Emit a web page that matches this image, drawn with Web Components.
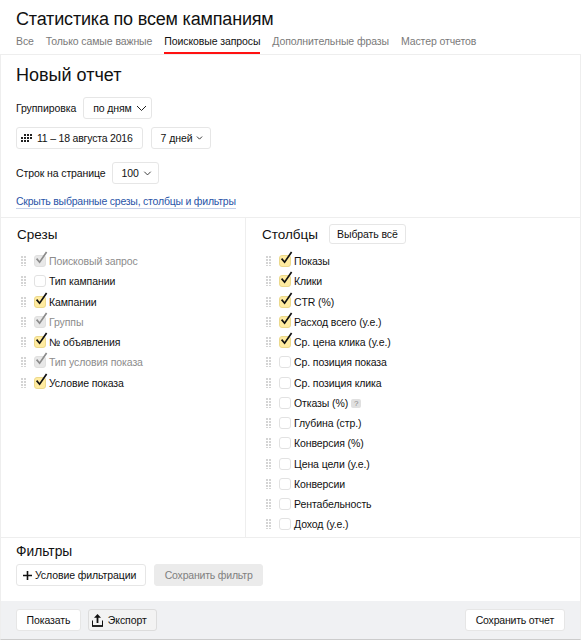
<!DOCTYPE html>
<html lang="ru">
<head>
<meta charset="utf-8">
<title>Статистика</title>
<style>
  html, body { margin: 0; background: #fff; }
  body { font-family: "Liberation Sans", Arial, sans-serif; color: #000; }
</style>
</head>
<body>
<report-page></report-page>

<script>
  // Plain small button, also used as a dropdown when it has the "arrow" attribute
  class YaButton extends HTMLElement {
    constructor() {
      super();
      this.attachShadow({ mode: 'open' });
      const size = Number(this.getAttribute('arrow')) || 11;
      const arrow = this.hasAttribute('arrow')
        ? `<svg class="arrow" width="${size}" height="${Math.round(size * 0.6)}" viewBox="0 0 11 7"><path d="M1 1l4.5 4.5L10 1" fill="none" stroke="#222" stroke-width="${11 / size}"/></svg>`
        : '';
      this.shadowRoot.innerHTML = `
      <style>
        :host {
          display: inline-flex;
          box-sizing: border-box;
          height: 22px;
          align-items: center;
          justify-content: center;
          gap: 4px;
          padding: 0 var(--pad-right, 10px) 0 var(--pad-left, 10px);
          background: #fff;
          border: 1px solid #e6e6e6;
          border-radius: 3px;
          font-size: 10.5px;
          letter-spacing: var(--track, -0.1px);
          white-space: nowrap;
          color: #111;
        }
        :host([arrow]) { padding-left: 9px; padding-right: var(--pad-right, 4px); }
        :host([disabled]) {
          background: #ebebeb;
          border-color: #ebebeb;
          color: #808080;
        }
        :host([gray]) {
          background: #f3f3f3;
          border-color: #dcdcdc;
        }
        ::slotted(svg) { display: block; flex: none; }
      </style>
      <slot></slot>${arrow}`;
    }
  }
  customElements.define('ya-button', YaButton);

  // Drag handle + checkbox + label
  class CheckRow extends HTMLElement {
    constructor() {
      super();
      this.attachShadow({ mode: 'open' });
      const tick = this.hasAttribute('checked') || this.hasAttribute('locked')
        ? `<svg class="tick" width="15" height="15" viewBox="0 0 15 15"><path d="M2.6 7.6l3 3.6L12.6 1" fill="none" stroke-width="1.7"/></svg>`
        : '';
      this.shadowRoot.innerHTML = `
      <style>
        :host {
          display: flex;
          align-items: center;
          height: 20.25px;
          font-size: 10.5px;
          letter-spacing: -0.1px;
          color: #111;
          white-space: nowrap;
        }
        :host([locked]) { color: #8c8c8c; }
        .grip {
          width: 6px;
          height: 10px;
          margin-right: 7px;
          flex: none;
          background-image: radial-gradient(circle at 1px 1px, #d4d4d4 1px, transparent 1px);
          background-size: 3px 3px;
        }
        .box {
          position: relative;
          box-sizing: border-box;
          width: 12px;
          height: 12px;
          margin-right: 3px;
          flex: none;
          border: 1px solid #e2e2e2;
          border-radius: 3px;
          background: #fff;
        }
        :host([checked]) .box { background: #ffeba0; border-color: #ecd98c; }
        :host([locked]) .box { background: #e8e8e8; border-color: #e0e0e0; }
        /* tick sticks out of the box at the top right */
        .tick { position: absolute; left: -1px; top: -5px; stroke: #111; }
        :host([locked]) .tick { stroke: #8c8c8c; }
        ::slotted(.hint) {
          display: inline-block;
          box-sizing: border-box;
          width: 10px;
          height: 9px;
          margin-left: 3px;
          border-radius: 2px;
          background: #e0e0e0;
          color: #888;
          font-size: 8px;
          line-height: 9px;
          letter-spacing: 0;
          text-align: center;
          vertical-align: 1px;
        }
      </style>
      <span class="grip"></span>
      <span class="box">${tick}</span>
      <span class="label"><slot></slot></span>`;
    }
  }
  customElements.define('check-row', CheckRow);

  class TabBar extends HTMLElement {
    constructor() {
      super();
      this.attachShadow({ mode: 'open' });
      this.shadowRoot.innerHTML = `
      <style>
        :host {
          display: flex;
          gap: 12px;
          height: 26px;
          padding-left: 16px;
          font-size: 10.5px;
          letter-spacing: -0.1px;
          color: #7a7a7a;
        }
        ::slotted(a) {
          display: block;
          box-sizing: border-box;
          height: 26px;
          padding-top: 7px;
          white-space: nowrap;
        }
        ::slotted(a.on) {
          color: #111;
          border-bottom: 2px solid #f11;
          height: 26px;
        }
      </style>
      <slot></slot>`;
    }
  }
  customElements.define('tab-bar', TabBar);

  class ReportPage extends HTMLElement {
    constructor() {
      super();
      this.attachShadow({ mode: 'open' });
      const rows = (list) => list.map(([text, state]) =>
        `<check-row ${state || ''}>${text}</check-row>`).join('');
      const slices = rows([
        ['Поисковый запрос', 'locked'],
        ['Тип кампании'],
        ['Кампании', 'checked'],
        ['Группы', 'locked'],
        ['№ объявления', 'checked'],
        ['Тип условия показа', 'locked'],
        ['Условие показа', 'checked']
      ]);
      const columns = rows([
        ['Показы', 'checked'],
        ['Клики', 'checked'],
        ['CTR (%)', 'checked'],
        ['Расход всего (у.е.)', 'checked'],
        ['Ср. цена клика (у.е.)', 'checked'],
        ['Ср. позиция показа'],
        ['Ср. позиция клика'],
        ['Отказы (%)<span class="hint">?</span>'],
        ['Глубина (стр.)'],
        ['Конверсия (%)'],
        ['Цена цели (у.е.)'],
        ['Конверсии'],
        ['Рентабельность'],
        ['Доход (у.е.)']
      ]);
      this.shadowRoot.innerHTML = `
      <style>
        :host {
          display: block;
          width: 582px;
          height: 643px;
          overflow: hidden;
        }
        h1 {
          margin: 0;
          padding: 8px 0 0 16px;
          height: 20px;
          font-size: 18px;
          letter-spacing: -0.18px;
          line-height: 22px;
          font-weight: 400;
          color: #111;
        }
        .card {
          box-sizing: border-box;
          width: 581px;
          height: 586px;
          border: 1px solid #eee;
          border-bottom: 1px solid #ccc;
          display: flex;
          flex-direction: column;
        }
        .form {
          height: 163px;
          box-sizing: border-box;
          padding: 9px 15px 0;
          border-bottom: 1px solid #eee;
          flex: none;
        }
        h2 {
          margin: 0 0 11px;
          font-size: 18px;
          line-height: 22px;
          font-weight: 400;
          color: #111;
        }
        .line {
          display: flex;
          align-items: center;
          gap: 8px;
          margin-bottom: 8px;
          font-size: 10.5px;
          letter-spacing: -0.1px;
          color: #111;
        }
        .line.group { gap: 7px; }
        .line.rows { gap: 6px; margin-top: 13px; margin-bottom: 7px; }
        a.toggle {
          display: inline-block;
          font-size: 10.5px;
          letter-spacing: -0.22px;
          color: #2a55a8;
          text-decoration: none;
          border-bottom: 1px solid #c5d0e8;
          line-height: 13px;
        }
        .cols {
          flex: none;
          height: 320px;
          display: grid;
          grid-template-columns: 244px 1fr;
          border-bottom: 1px solid #eee;
          box-sizing: border-box;
        }
        .cols > section { padding: 7px 16px 0 16px; }
        .cols > section + section { border-left: 1px solid #eee; }
        h3 {
          margin: 0;
          font-size: 13.5px;
          line-height: 18px;
          font-weight: 400;
          color: #111;
        }
        .head {
          display: flex;
          align-items: center;
          gap: 11px;
          height: 20px;
          margin-bottom: 6px;
        }
        .head ya-button {
          height: 20px;
          margin-top: -2px;
          --pad-left: 7px;
          --pad-right: 7px;
        }
        .list { padding-left: 4px; }
        .filters {
          flex: none;
          height: 63px;
          box-sizing: border-box;
          padding: 5px 15px 0;
        }
        .filters h3 { font-size: 13.8px; margin-bottom: 3px; }
        .filters div { display: flex; gap: 8px; }
        .add { --pad-left: 6px; --pad-right: 9px; gap: 3px; }
        .filters ya-button[disabled] { --track: -0.2px; --pad-left: 9.5px; --pad-right: 9.5px; }
        .date { --pad-left: 3px; --pad-right: 9px; --track: -0.2px; }
        .period { --pad-right: 7px; }
        .pages { --pad-right: 6px; }
        .bar {
          flex: 1;
          display: flex;
          align-items: flex-start;
          gap: 7px;
          padding: 8px 15px 0;
          background: #f0f1f3;
        }
        .bar .gap { flex: 1; }
        .show { --pad-left: 9.5px; --pad-right: 9.5px; }
        .export { --pad-left: 3px; --pad-right: 9px; gap: 5px; }
        .save { --track: -0.2px; }
      </style>
      <h1>Статистика по всем кампаниям</h1>
      <tab-bar>
        <a>Все</a>
        <a>Только самые важные</a>
        <a class="on">Поисковые запросы</a>
        <a>Дополнительные фразы</a>
        <a>Мастер отчетов</a>
      </tab-bar>
      <div class="card">
        <div class="form">
          <h2>Новый отчет</h2>
          <div class="line group">Группировка <ya-button arrow="11">по дням</ya-button></div>
          <div class="line">
            <ya-button class="date">
              <svg width="13" height="9" viewBox="0 0 13 9"><path d="M4 0h2v2H4zM7 0h2v2H7zM10 0h2v2h-2zM1 3h2v2H1zM4 3h2v2H4zM7 3h2v2H7zM10 3h2v2h-2zM1 6h2v2H1zM4 6h2v2H4zM7 6h2v2H7z" fill="#222"/></svg>
              11 – 18 августа 2016
            </ya-button>
            <ya-button class="period" arrow="7">7 дней</ya-button>
          </div>
          <div class="line rows">Строк на странице <ya-button class="pages" arrow="9">100</ya-button></div>
          <a class="toggle">Скрыть выбранные срезы, столбцы и фильтры</a>
        </div>
        <div class="cols">
          <section>
            <div class="head"><h3>Срезы</h3></div>
            <div class="list">${slices}</div>
          </section>
          <section>
            <div class="head"><h3>Столбцы</h3><ya-button>Выбрать всё</ya-button></div>
            <div class="list">${columns}</div>
          </section>
        </div>
        <div class="filters">
          <h3>Фильтры</h3>
          <div>
            <ya-button class="add">
              <svg width="9" height="9" viewBox="0 0 9 9"><path d="M4.5 0v9M0 4.5h9" stroke="#111" stroke-width="1.6"/></svg>
              Условие фильтрации
            </ya-button>
            <ya-button disabled>Сохранить фильтр</ya-button>
          </div>
        </div>
        <div class="bar">
          <ya-button class="show">Показать</ya-button>
          <ya-button class="export" gray>
            <svg width="11" height="13" viewBox="0 0 11 13"><path d="M5.5 0L9 3.8H2z" fill="#111"/><path d="M5.5 3v6" stroke="#111" stroke-width="1.8"/><path d="M.5 6.5V12h10V6.5" fill="none" stroke="#111" stroke-width="1"/><path d="M0 12h11" stroke="#111" stroke-width="1.6"/></svg>
            Экспорт
          </ya-button>
          <span class="gap"></span>
          <ya-button class="save">Сохранить отчет</ya-button>
        </div>
      </div>`;
    }
  }
  customElements.define('report-page', ReportPage);
</script>
</body>
</html>
